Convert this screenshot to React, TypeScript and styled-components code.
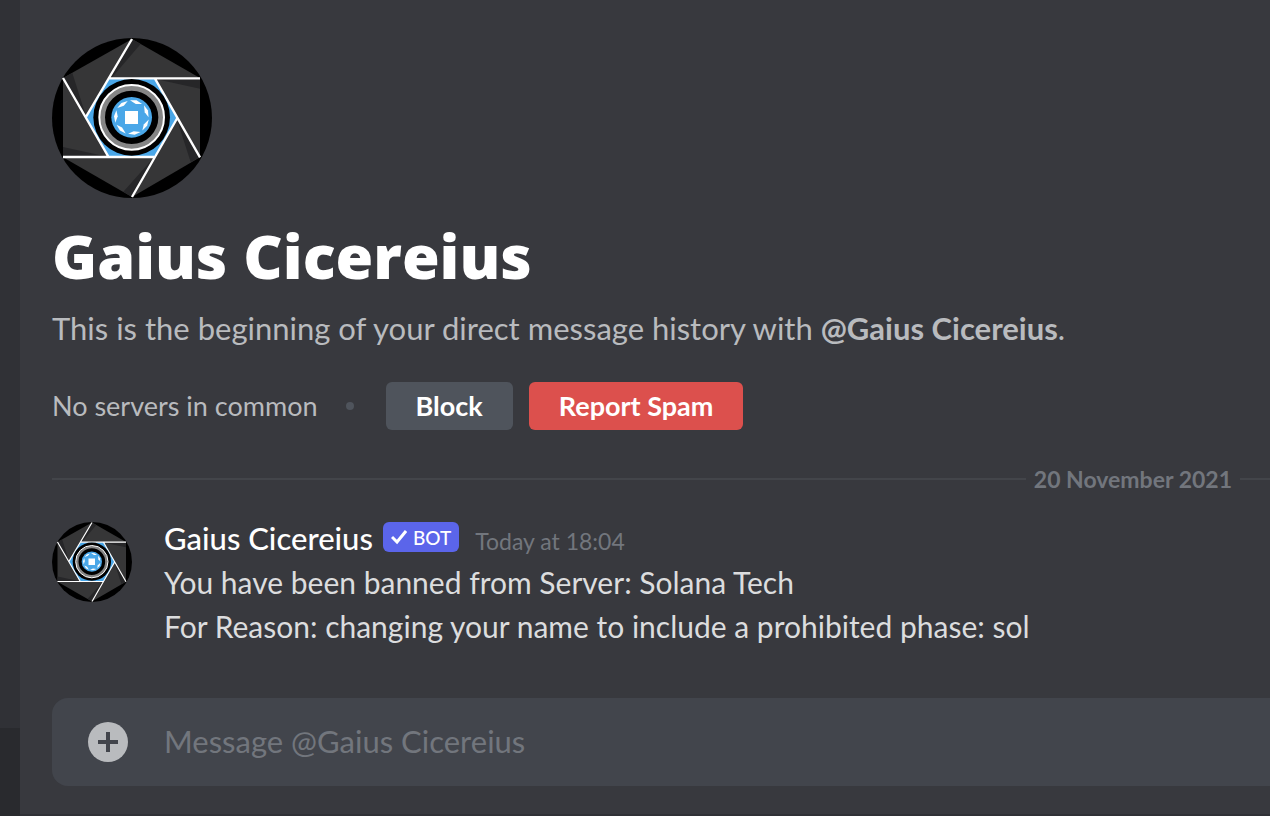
import React from 'react';
import styled, { createGlobalStyle } from 'styled-components';

const Global = createGlobalStyle`
  * { box-sizing: border-box; }
  html, body, #root { height: 100%; }
  body {
    margin: 0;
    background: #38393e;
    font-family: Lato, "Liberation Sans", sans-serif;
  }
`;

const Shell = styled.div`
  display: flex;
  min-height: 100%;
  overflow: hidden;
`;

const Sidebar = styled.aside`
  flex: 0 0 20px;
  display: flex;
  flex-direction: column;
  background: #303136;
`;

const UserPanel = styled.div`
  height: 88px;
  margin-top: auto;
  background: #292a2e;
`;

const Chat = styled.main`
  flex: 1;
  min-width: 0;
  display: flex;
  flex-direction: column;
  padding: 38px 0 28px 32px;
  border-bottom: 2px solid #303136;
`;

const Avatar = styled.svg<{ $size: number }>`
  flex: none;
  display: block;
  width: ${(p) => p.$size}px;
  height: ${(p) => p.$size}px;
`;

const Title = styled.h1`
  margin: 16px 0 0;
  font-family: "Open Sans", Lato, sans-serif;
  font-size: 61px;
  font-weight: 800;
  line-height: 84px;
  color: #fff;
`;

const Intro = styled.p`
  margin: 8px 0 0;
  font-size: 31px;
  line-height: 44px;
  color: #b9bbbe;
`;

const Actions = styled.div`
  display: flex;
  align-items: center;
  margin-top: 32px;
`;

const Servers = styled.span`
  font-size: 27px;
  line-height: 36px;
  color: #b9bbbe;
`;

const Dot = styled.span`
  width: 8px;
  height: 8px;
  margin: 0 32px 0 28px;
  border-radius: 50%;
  background: #4f545c;
`;

const Button = styled.button<{ $danger?: boolean }>`
  height: 48px;
  padding: 0 30px;
  margin-right: 16px;
  border: 0;
  border-radius: 6px;
  background: ${(p) => (p.$danger ? '#dc504d' : '#4f545c')};
  color: #fff;
  font: 700 27px/36px Lato, sans-serif;
`;

const Divider = styled.div`
  display: flex;
  align-items: center;
  gap: 8px;
  margin-top: 33px;
  font-size: 23px;
  font-weight: 700;
  line-height: 32px;
  color: #72767d;
  &::before, &::after {
    content: "";
    height: 2px;
    background: #43454a;
  }
  &::before { flex: 1; }
  &::after { width: 30px; }
`;

const Message = styled.article`
  display: flex;
  gap: 32px;
  margin-top: 27px;
`;

const MessageHead = styled.header`
  display: flex;
  align-items: flex-start;
  height: 38px;
`;

const Author = styled.h2`
  margin: 0;
  font-size: 31px;
  font-weight: 500;
  line-height: 32px;
  color: #fff;
`;

const Badge = styled.span`
  display: flex;
  align-items: center;
  gap: 6px;
  height: 30px;
  margin: 0 16px 0 10px;
  padding: 0 8px;
  border-radius: 6px;
  background: #5b65ea;
  color: #fff;
  font-size: 19px;
  font-weight: 500;
`;

const Time = styled.time`
  font-size: 23px;
  line-height: 38px;
  color: #72767d;
`;

const Body = styled.p`
  margin: 0;
  font-size: 30px;
  line-height: 44px;
  color: #dcddde;
`;

const Composer = styled.form`
  display: flex;
  align-items: center;
  gap: 36px;
  height: 88px;
  margin-top: 50px;
  padding-left: 36px;
  border-radius: 16px 0 0 16px;
  background: #42454c;
`;

const AddButton = styled.button`
  display: block;
  padding: 0;
  border: 0;
  background: none;
  svg { display: block; }
`;

const Input = styled.input`
  flex: 1;
  min-width: 0;
  padding: 0 0 2px;
  border: 0;
  outline: 0;
  background: none;
  color: #dcddde;
  font: 400 31px/44px Lato, sans-serif;
  &::placeholder { color: #72767d; opacity: 1; }
`;

const dashes = [0, 1, 2, 3, 4, 5, 6];

function ShutterAvatar({ size }: { size: number }) {
  return (
    <Avatar $size={size} viewBox="36 30 480 480" role="img" aria-label="Gaius Cicereius">
      <circle cx="276" cy="270" r="240" fill="#000" />
      <path d="M276 33 480 150V388L276 507 69 388V150Z" fill="#363637" />
      <path
        d="M276 33 302 48 214 151H208ZM480 151V182L350 154ZM480 388 452 402 410 272ZM276 507 250 491 342 388ZM69 388V357L203 386ZM69 150 97 135 138 264Z"
        fill="#262628"
      />
      <path d="M208 151H345L412 270 345 388H205L137 268Z" fill="#4aa7e8" />
      <path
        d="M276 33 137 268M480 151H208M480 388 345 152M276 507 412 270M69 387H342M69 150 205 386"
        fill="none"
        stroke="#fff"
        strokeWidth="7"
      />
      <circle cx="275" cy="268" r="115" fill="#000" />
      <circle cx="275" cy="268" r="88" fill="none" stroke="#858585" strokeWidth="16" />
      <circle cx="275" cy="268" r="97" fill="none" stroke="#fff" strokeWidth="6" />
      <circle cx="275" cy="268" r="61" fill="#4aa7e8" />
      <path d="M255 249h39v39h-39Z" fill="#fff" />
      {dashes.map((i) => (
        <path
          key={i}
          d="M-19-48 0-53 19-47 1-42Z"
          fill="#fff"
          transform={`translate(275 268) rotate(${16 + (i * 360) / 7})`}
        />
      ))}
    </Avatar>
  );
}

export default function App() {
  return (
    <>
      <Global />
      <Shell>
        <Sidebar>
          <UserPanel />
        </Sidebar>
        <Chat>
          <ShutterAvatar size={160} />
          <Title>Gaius Cicereius</Title>
          <Intro>
            This is the beginning of your direct message history with <strong>@Gaius Cicereius</strong>.
          </Intro>
          <Actions>
            <Servers>No servers in common</Servers>
            <Dot />
            <Button type="button">Block</Button>
            <Button type="button" $danger>Report Spam</Button>
          </Actions>
          <Divider>20 November 2021</Divider>
          <Message>
            <ShutterAvatar size={80} />
            <div>
              <MessageHead>
                <Author>Gaius Cicereius</Author>
                <Badge>
                  <svg width="16" height="16" viewBox="0 0 16 16" aria-hidden="true">
                    <path d="M1 8 6 13 15 2" fill="none" stroke="#fff" strokeWidth="3" />
                  </svg>
                  BOT
                </Badge>
                <Time>Today at 18:04</Time>
              </MessageHead>
              <Body>
                You have been banned from Server: Solana Tech
                <br />
                For Reason: changing your name to include a prohibited phase: sol
              </Body>
            </div>
          </Message>
          <Composer>
            <AddButton type="button" aria-label="Add attachment">
              <svg width="40" height="40" viewBox="0 0 40 40">
                <circle cx="20" cy="20" r="20" fill="#b9bbbe" />
                <path d="M20 10V30M10 20H30" stroke="#42454c" strokeWidth="4" />
              </svg>
            </AddButton>
            <Input aria-label="Message" placeholder="Message @Gaius Cicereius" />
          </Composer>
        </Chat>
      </Shell>
    </>
  );
}
